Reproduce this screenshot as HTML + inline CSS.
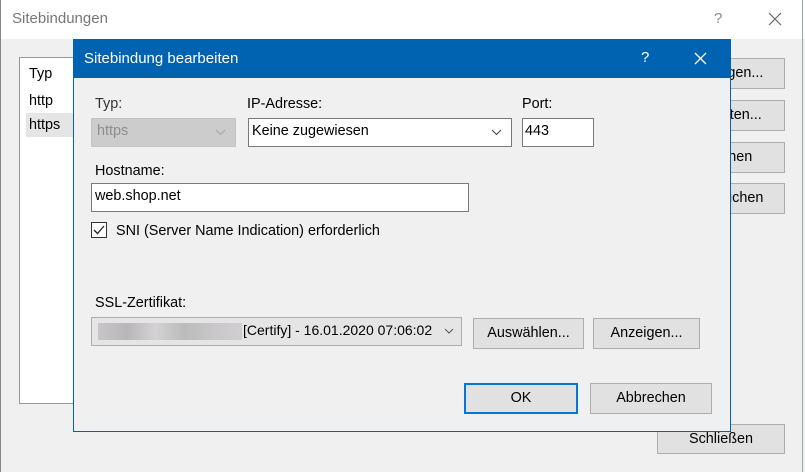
<!DOCTYPE html>
<html><head><style>
*{margin:0;padding:0;box-sizing:border-box}
body{width:805px;height:472px;background:#f0f0f0;font-family:"Liberation Sans",sans-serif;font-size:14.4px;color:#000;position:relative;overflow:hidden}
.a{position:absolute;white-space:nowrap}
.btn{position:absolute;background:#e1e1e1;border:1px solid #adadad;text-align:center;white-space:nowrap}
.inp{position:absolute;background:#fff;border:1px solid #7a7a7a}
</style></head><body>
<div class="a" style="left:0;top:0;width:805px;height:39px;background:#fff;border-left:1px solid #888"></div>
<div class="a" style="left:0;top:0;width:1px;height:472px;background:#888"></div>
<div class="a" style="left:802px;top:0;width:1px;height:472px;background:#9aa"></div>
<div class="a" style="left:12px;top:10px;font-size:15px;color:#777">Sitebindungen</div>
<div class="a" style="left:714px;top:10px;font-size:15px;color:#888">?</div>
<svg class="a" style="left:768px;top:12px" width="14" height="14"><path d="M1 1L13 13M13 1L1 13" stroke="#666" stroke-width="1.2"/></svg>

<div class="a" style="left:19px;top:57px;width:70px;height:347px;background:#fff;border:1px solid #999"></div>
<div class="a" style="left:26px;top:113px;width:50px;height:24px;background:#e5e5e5"></div>
<div class="a" style="left:29px;top:66px">Typ</div>
<div class="a" style="left:29px;top:93px">http</div>
<div class="a" style="left:29px;top:117px">https</div>

<div class="btn" style="left:657px;top:58px;width:128px;height:31px;line-height:29px">Hinzufügen...</div>
<div class="btn" style="left:657px;top:100px;width:128px;height:31px;line-height:29px">Bearbeiten...</div>
<div class="btn" style="left:657px;top:142px;width:128px;height:31px;line-height:29px">Entfernen</div>
<div class="btn" style="left:657px;top:183px;width:128px;height:31px;line-height:29px">Durchsuchen</div>
<div class="btn" style="left:657px;top:424px;width:128px;height:30px;line-height:28px">Schließen</div>

<div class="a" style="left:73px;top:39px;width:658px;height:393px;background:#f0f0f0;border:1px solid #0063b1"></div>
<div class="a" style="left:73px;top:39px;width:658px;height:39px;background:#0063b1"></div>
<div class="a" style="left:84px;top:50px;font-size:15px;color:#fff">Sitebindung bearbeiten</div>
<div class="a" style="left:641px;top:49px;font-size:15px;color:#fff">?</div>
<svg class="a" style="left:694px;top:52px" width="13" height="13"><path d="M1 1L12 12M12 1L1 12" stroke="#fff" stroke-width="1.3"/></svg>

<div class="a" style="left:95px;top:96px;color:#333">Typ:</div>
<div class="a" style="left:247px;top:96px">IP-Adresse:</div>
<div class="a" style="left:522px;top:96px">Port:</div>
<div class="a" style="left:91px;top:118px;width:145px;height:29px;background:#cccccc;border:1px solid #c4c4c4"></div>
<div class="a" style="left:97px;top:123px;color:#8d8d8d">https</div>
<svg class="a" style="left:215px;top:129px" width="11" height="7"><path d="M1 1L5.5 5.5L10 1" stroke="#a8a8a8" fill="none"/></svg>
<div class="inp" style="left:248px;top:118px;width:264px;height:29px"></div>
<div class="a" style="left:252px;top:123px">Keine zugewiesen</div>
<svg class="a" style="left:491px;top:129px" width="11" height="7"><path d="M1 1L5.5 5.5L10 1" stroke="#444" fill="none"/></svg>
<div class="inp" style="left:522px;top:118px;width:72px;height:29px"></div>
<div class="a" style="left:525px;top:123px">443</div>

<div class="a" style="left:95px;top:163px">Hostname:</div>
<div class="inp" style="left:91px;top:183px;width:378px;height:29px"></div>
<div class="a" style="left:95px;top:188px">web.shop.net</div>

<div class="a" style="left:91px;top:222px;width:16px;height:16px;background:#fff;border:1px solid #333"></div>
<svg class="a" style="left:92px;top:223px" width="14" height="14"><path d="M2 7L5.5 10.5L12 3" stroke="#222" stroke-width="1.3" fill="none"/></svg>
<div class="a" style="left:116px;top:223px">SNI (Server Name Indication) erforderlich</div>

<div class="a" style="left:95px;top:295px">SSL-Zertifikat:</div>
<div class="a" style="left:91px;top:317px;width:371px;height:29px;background:#e5e5e5;border:1px solid #adadad"></div>
<div class="a" style="left:98px;top:323px;width:144px;height:17px;background:linear-gradient(90deg,#c8c6c8,#b8b6b8 20%,#d4d2d4 40%,#bbb 60%,#c9c7c9 80%,#d0ced0)"></div>
<div class="a" style="left:243px;top:322px;font-size:14px">[Certify] - 16.01.2020 07:06:02</div>
<svg class="a" style="left:444px;top:328px" width="10" height="6"><path d="M1 1L5 5L9 1" stroke="#555" fill="none"/></svg>
<div class="btn" style="left:473px;top:318px;width:111px;height:31px;line-height:29px">Auswählen...</div>
<div class="btn" style="left:593px;top:318px;width:107px;height:31px;line-height:29px">Anzeigen...</div>

<div class="btn" style="left:464px;top:383px;width:114px;height:31px;line-height:27px;border:2px solid #0078d7">OK</div>
<div class="btn" style="left:590px;top:383px;width:122px;height:31px;line-height:29px">Abbrechen</div>
</body></html>
